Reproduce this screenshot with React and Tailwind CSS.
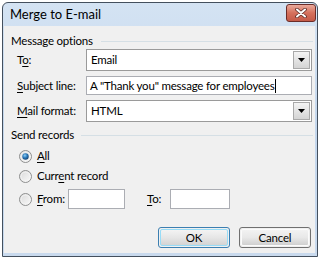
import React from 'react';

const ui = "font-['Lato','Noto_Sans',sans-serif] text-[11.5px] tracking-[-0.2px] leading-[16px] text-black";

const Key = ({ children }) => <span className="underline underline-offset-[2px]">{children}</span>;

const ArrowButton = () => (
  <div className="w-[17px] flex items-center justify-center border border-[#a9a9a9] bg-gradient-to-b from-[#f4f4f4] to-[#d4d4d4]">
    <svg width="7" height="4" viewBox="0 0 7 4"><path d="M0 0h7L3.5 4z" fill="#000" /></svg>
  </div>
);

const Combo = ({ value }) => (
  <div className="w-[226px] h-[22px] flex border border-[#9a9a9a] bg-white p-px">
    <div className="flex-1 flex items-center pl-[3px]">{value}</div>
    <ArrowButton />
  </div>
);

const Radio = ({ checked }) => (
  <svg width="13" height="13" viewBox="0 0 13 13" className="shrink-0">
    <defs>
      <linearGradient id="rf" x1="0" y1="0" x2="1" y2="1">
        <stop offset="0" stopColor="#d8d8d8" />
        <stop offset="1" stopColor="#fbfbfb" />
      </linearGradient>
      <radialGradient id="rd" cx="0.4" cy="0.35" r="0.7">
        <stop offset="0" stopColor="#8fd0f7" />
        <stop offset="0.5" stopColor="#2a79bb" />
        <stop offset="1" stopColor="#14406b" />
      </radialGradient>
    </defs>
    <circle cx="6.5" cy="6.5" r="6" fill="url(#rf)" stroke="#8e8f8f" />
    <circle cx="6.5" cy="6.5" r="4.5" fill="none" stroke="#f4f4f4" strokeWidth="0.8" />
    {checked && <circle cx="6.5" cy="6.5" r="3.2" fill="url(#rd)" />}
  </svg>
);

const Section = ({ title, gap }) => (
  <div className="h-[16px] flex items-center pl-[7px] pr-[2px]">
    <span className="whitespace-nowrap">{title}</span>
    <div className={`flex-1 h-px bg-[#d5dfe5] ${gap}`} />
  </div>
);

export default function App() {
  return (
    <div className={`w-[322px] h-[259px] bg-white pl-[2px] pt-[2px] ${ui}`}>
      <div className="w-[316px] h-[255px] flex flex-col rounded-t-[6px] border border-[#44505e] bg-gradient-to-b from-[#d4e3f3] via-[#c3d6ec] to-[#c9daee]">
        <div className="h-[23px] flex items-start pl-[7px] pr-[1px]">
          <span className="flex-1 mt-[3px] text-[13px] tracking-normal leading-[17px]">Merge to E-mail</span>
          <div className="mt-[1px] w-[30px] h-[18px] rounded-[3px] border border-[#6b2c28] bg-gradient-to-b from-[#e9a99b] via-[#d5705c] to-[#c45a48] flex items-center justify-center">
            <svg width="12" height="10" viewBox="0 0 12 10">
              <path d="M2 1.5l8 7M10 1.5l-8 7" stroke="#5a2a25" strokeWidth="3.6" strokeLinecap="round" />
              <path d="M2 1.5l8 7M10 1.5l-8 7" stroke="#fff" strokeWidth="2" strokeLinecap="round" />
            </svg>
          </div>
        </div>
        <div className="flex-1 ml-px mr-[2px] mb-[3px] bg-[#f0f0f0] flex flex-col">
          <div className="mt-[7px]">
            <Section title="Message options" gap="ml-[8px]" />
          </div>
          <div className="flex items-center h-[22px] pl-[13px]">
            <span className="w-[69px]">T<Key>o</Key>:</span>
            <Combo value="Email" />
          </div>
          <div className="flex items-center h-[19px] mt-[5px] pl-[13px]">
            <span className="w-[69px] whitespace-nowrap"><Key>S</Key>ubject line:</span>
            <div className="w-[226px] h-[19px] flex items-center border border-[#abadb3] bg-white pl-[3px]">
              <span className="whitespace-nowrap">A "Thank you" message for employees</span>
              <span className="w-px h-[14px] bg-black" />
            </div>
          </div>
          <div className="flex items-center h-[22px] mt-[5px] pl-[13px]">
            <span className="w-[69px] whitespace-nowrap"><Key>M</Key>ail format:</span>
            <Combo value="HTML" />
          </div>
          <div className="mt-[5px]">
            <Section title="Send records" gap="ml-[7px]" />
          </div>
          <div className="flex items-center h-[16px] mt-[5px] pl-[15px] gap-[5px]">
            <Radio checked />
            <span><Key>A</Key>ll</span>
          </div>
          <div className="flex items-center h-[16px] mt-[4px] pl-[15px] gap-[5px]">
            <Radio />
            <span>Curr<Key>e</Key>nt record</span>
          </div>
          <div className="flex items-center h-[20px] mt-[5px] pl-[15px]">
            <Radio />
            <span className="w-[31px] ml-[5px]"><Key>F</Key>rom:</span>
            <div className="w-[57px] h-[20px] border border-[#abadb3] bg-white" />
            <span className="w-[23px] ml-[22px]"><Key>T</Key>o:</span>
            <div className="w-[60px] h-[20px] border border-[#abadb3] bg-white" />
          </div>
          <div className="flex justify-end gap-[9px] mt-[18px] pr-[4px]">
            <button className="w-[72px] h-[21px] rounded-[3px] border border-[#3c7fb1] p-px">
              <div className="h-full rounded-[2px] border border-[#97dcf7] bg-gradient-to-b from-[#f3f3f3] via-[#e6e6e6] to-[#d3d3d3] flex items-center justify-center">OK</div>
            </button>
            <button className="w-[72px] h-[21px] rounded-[3px] border border-[#707070] p-px">
              <div className="h-full rounded-[2px] border border-[#fbfbfb] bg-gradient-to-b from-[#f2f2f2] via-[#e8e8e8] to-[#d0d0d0] flex items-center justify-center">Cancel</div>
            </button>
          </div>
        </div>
      </div>
    </div>
  );
}
